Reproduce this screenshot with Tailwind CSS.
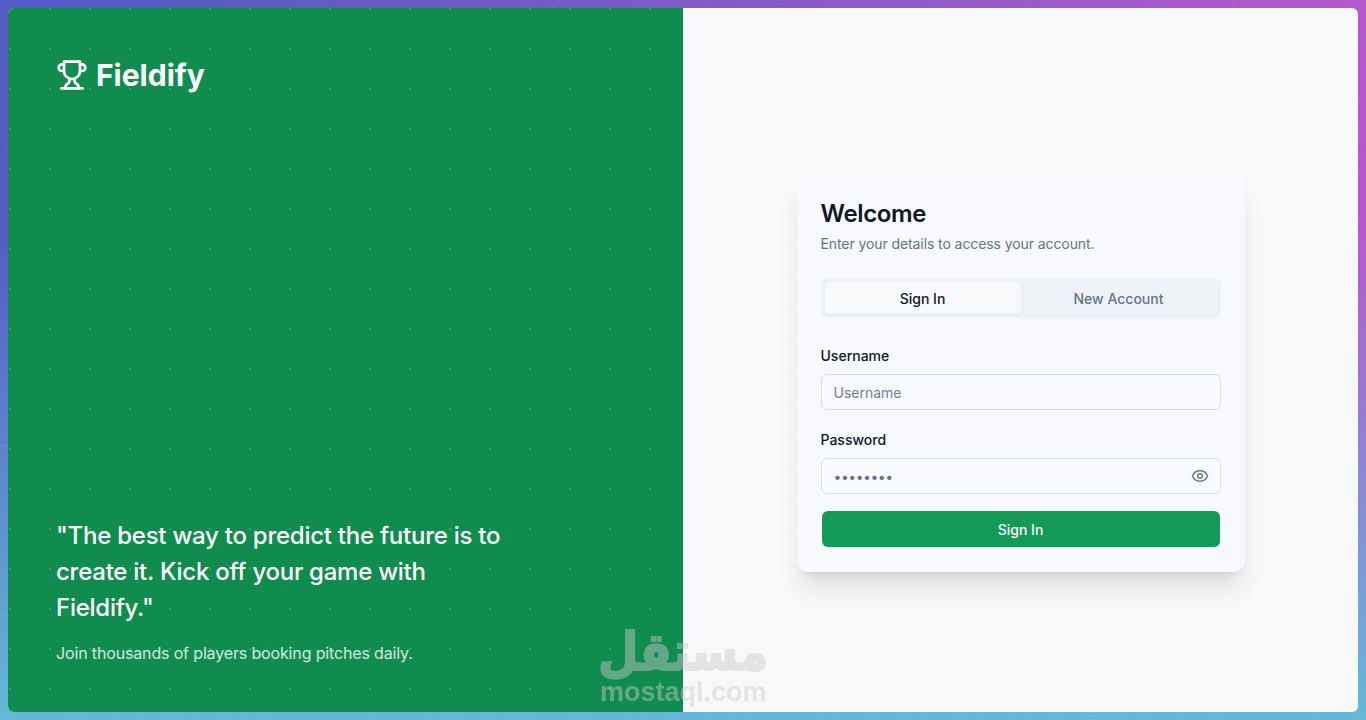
<!doctype html>
<html>
<head>
<meta charset="utf-8">
<script src="https://cdn.jsdelivr.net/npm/@tailwindcss/browser@4"></script>
</head>
<body class="h-[720px] w-[1366px] overflow-hidden font-['Inter',sans-serif]">
<div class="relative h-[720px] w-[1366px] p-2 bg-[linear-gradient(to_top,#5cb7d9_0%,rgba(92,183,217,0)_68%),linear-gradient(to_right,#4a4fca_0%,#4f50c8_15%,#b44fd0_100%)]">
  <svg class="absolute inset-0 h-full w-full opacity-20" aria-hidden="true"><filter id="n"><feTurbulence type="fractalNoise" baseFrequency="0.9" numOctaves="2" stitchTiles="stitch"/><feColorMatrix type="saturate" values="0"/></filter><rect width="100%" height="100%" filter="url(#n)"/></svg>
  <div class="relative flex h-[704px] w-[1350px] overflow-hidden rounded-md bg-[#f7f8fa]">
    <div class="flex w-[675px] flex-col justify-between bg-[#118c4f] bg-[radial-gradient(circle,rgba(255,255,255,0.18)_1px,transparent_1.4px)] bg-[length:40px_40px] bg-[position:22px_-19px] pl-[48px] pr-[32px] pt-[48px] pb-[47px] text-white">
      <div class="flex h-[38px] items-center gap-[8px]">
        <svg class="h-[32px] w-[32px]" viewBox="0 0 24 24" fill="none" stroke="currentColor" stroke-width="2" stroke-linecap="round" stroke-linejoin="round"><path d="M6 9H4.5a2.5 2.5 0 0 1 0-5H6"/><path d="M18 9h1.5a2.5 2.5 0 0 0 0-5H18"/><path d="M4 22h16"/><path d="M10 14.66V17c0 .55-.47.98-.97 1.21C7.85 18.75 7 20.24 7 22"/><path d="M14 14.66V17c0 .55.47.98.97 1.21C16.15 18.75 17 20.24 17 22"/><path d="M18 2H6v7a6 6 0 0 0 12 0V2Z"/></svg>
        <span class="text-[30px] font-bold leading-[38px] tracking-[0px]">Fieldify</span>
      </div>
      <div class="w-[460px]">
        <p class="text-[24px] font-medium leading-[36px] tracking-[-0.25px]">"The best way to predict the future is to create it. Kick off your game with Fieldify."</p>
        <p class="mt-[15px] text-[16px] leading-[24px] tracking-[-0.15px] text-white/80">Join thousands of players booking pitches daily.</p>
      </div>
    </div>
    <div class="flex w-[675px] items-center justify-center bg-[radial-gradient(circle,#eef0f3_1px,transparent_1.4px)] bg-[length:32px_32px] bg-[position:-3px_-1px]">
      <div class="mt-[26px] w-[448px] rounded-xl bg-[#f8f9fb]/85 px-6 pt-6 pb-[25px] shadow-xl">
        <h1 class="text-[24px] font-semibold leading-[32px] tracking-[-0.35px] text-[#0f172a]">Welcome</h1>
        <p class="mt-[4px] text-[14px] leading-[20px] tracking-[-0.09px] text-[#64748b]">Enter your details to access your account.</p>
        <div class="mt-6 flex h-[40px] rounded-md bg-[#eef2f6] p-1">
          <div class="flex flex-1 items-center justify-center rounded-sm bg-[#f8f9fb] text-[14px] font-medium text-[#0f172a] shadow-xs">Sign In</div>
          <div class="flex flex-1 items-center justify-center text-[14px] font-medium text-[#64748b]">New Account</div>
        </div>
        <label class="mt-[28px] block text-[14px] font-medium leading-[20px] text-[#0f172a]">Username</label>
        <div class="mt-2 flex h-[36px] items-center rounded-md border border-[#d6dee9] bg-[#fafbfd]/70 px-3 text-[14px] text-[#718096]">Username</div>
        <label class="mt-[20px] block text-[14px] font-medium leading-[20px] text-[#0f172a]">Password</label>
        <div class="mt-2 flex h-[36px] items-center justify-between rounded-md border border-[#d6dee9] bg-[#fafbfd]/70 pl-3 pr-[11px] text-[14px] text-[#64748b]">
          <span class="tracking-[-0.5px]">••••••••</span>
          <svg class="h-[18px] w-[18px] text-[#64748b]" viewBox="0 0 24 24" fill="none" stroke="currentColor" stroke-width="2" stroke-linecap="round" stroke-linejoin="round"><path d="M2.06 12.35a1 1 0 0 1 0-.7 10.75 10.75 0 0 1 19.88 0 1 1 0 0 1 0 .7 10.75 10.75 0 0 1-19.88 0"/><circle cx="12" cy="12" r="3"/></svg>
        </div>
        <button class="mx-[1px] mt-[17px] flex h-[36px] w-[398px] items-center justify-center rounded-md bg-[#149a57] text-[14px] font-medium text-[#f8fafc]">Sign In</button>
      </div>
    </div>
  </div>
  <div class="absolute left-[608px] top-[630px] h-[44px] w-[166px] scale-x-[0.93] scale-y-[1.05] text-center font-['DejaVu_Sans',sans-serif] text-[50px] font-bold leading-[44px] text-[#cbcbcb] opacity-45 [-webkit-text-stroke:2px_#cbcbcb]" dir="rtl">مستقل</div>
  <div class="absolute left-[600px] top-[677px] w-[166px] text-center font-['Liberation_Sans',sans-serif] text-[27px] font-bold leading-[30px] text-[#cbcbcb] opacity-45">mostaql.com</div>
</div>
</body>
</html>
